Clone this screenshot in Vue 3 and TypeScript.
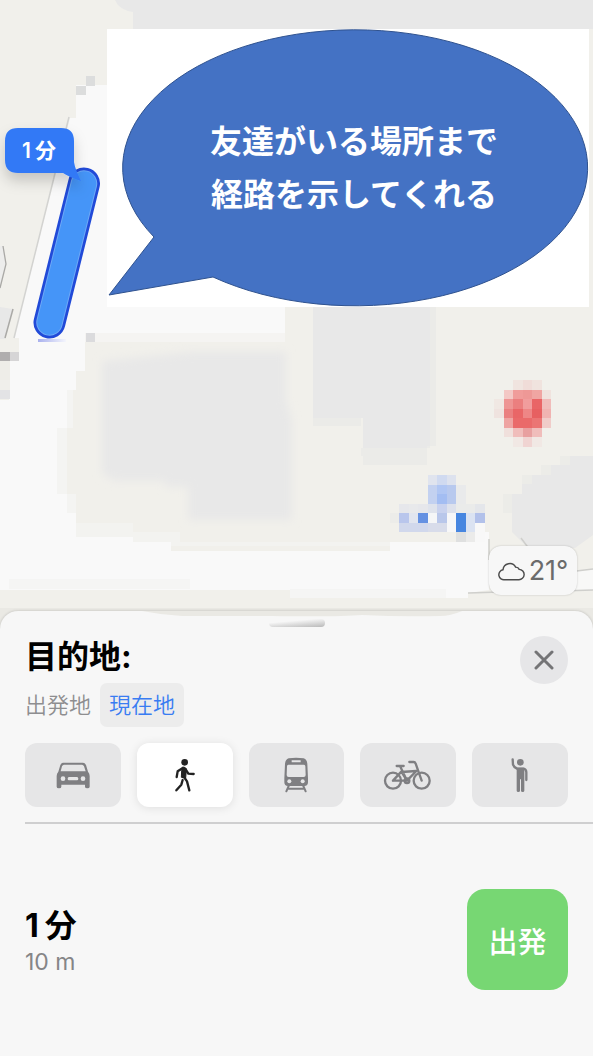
<script setup lang="ts">
import { ref } from 'vue'

type Cell = [col: number, row: number, fill: string]

const CELL = 9.5

const cells: Cell[] = [
  [9, 8, '#dcdddd'], [8, 9, '#dcdddd'], [9, 35, '#dbdbdd'],
  [0, 37, '#b0aeae'], [1, 37, '#d6d5d6'], [0, 38, '#eeede8'], [0, 39, '#eeede8'], [0, 40, '#f0efeb'], [0, 41, '#e3e3e5'],
  [54, 40, '#f0e4df'], [55, 40, '#f0dcd8'], [56, 40, '#f0e3de'],
  [53, 41, '#f3c8c5'], [54, 41, '#f09c9a'], [55, 41, '#ee9896'], [56, 41, '#f0a5a2'], [57, 41, '#f0e3de'],
  [52, 42, '#f0e8e3'], [53, 42, '#ee9594'], [54, 42, '#eb7f7f'], [55, 42, '#f19d9d'], [56, 42, '#e96566'], [57, 42, '#f0bcba'],
  [52, 43, '#efe3df'], [53, 43, '#ea8080'], [54, 43, '#e96667'], [55, 43, '#ee8686'], [56, 43, '#e76061'], [57, 43, '#f0b3b1'],
  [53, 44, '#eea4a2'], [54, 44, '#ea6a6a'], [55, 44, '#ea6a6a'], [56, 44, '#eb7574'], [57, 44, '#f0ccc9'],
  [53, 45, '#f0e0dc'], [54, 45, '#f0bdbb'], [55, 45, '#e8a0a0'], [56, 45, '#f0bdbb'],
  [54, 46, '#f1e8e4'], [55, 46, '#f0d4d2'], [56, 46, '#f1e8e4'],
  [45, 50, '#e0e4ee'], [46, 50, '#d0daf0'], [47, 50, '#dde2ee'],
  [45, 51, '#c3d1f0'], [46, 51, '#b0c6f3'], [47, 51, '#b8c9ee'], [48, 51, '#e9eaeb'],
  [45, 52, '#c3d1f0'], [46, 52, '#a3bdf2'], [47, 52, '#b8c9ee'], [48, 52, '#e9eaeb'],
  [42, 53, '#e6e7eb'], [43, 53, '#e8e9eb'], [44, 53, '#e6e7eb'], [45, 53, '#dfe3ec'], [46, 53, '#c9d2ee'], [47, 53, '#dde1ec'], [48, 53, '#eaebea'], [49, 53, '#eaebea'], [50, 53, '#e4e6ea'],
  [41, 54, '#ecece9'], [42, 54, '#b9c6ec'], [43, 54, '#e1e5ef'], [44, 54, '#6591e2'], [45, 54, '#f5f6f7'], [46, 54, '#b9c7ea'], [47, 54, '#f7f7f8'], [48, 54, '#4786e0'], [49, 54, '#dbe3f2'], [50, 54, '#b2c1ea'],
  [42, 55, '#d1d8ec'], [43, 55, '#d1d8ec'], [44, 55, '#d1d8ec'], [45, 55, '#d8dcea'], [46, 55, '#d8dcea'], [47, 55, '#f7f7f8'], [48, 55, '#4786e0'], [49, 55, '#dbe3f2'], [50, 55, '#f8f8f8'],
  [48, 56, '#dfe0e0'], [49, 56, '#ebebea'], [50, 56, '#f8f8f8'],
]

const modes = [
  { id: 'car', label: '車', box: '79 45 162 120' },
  { id: 'walk', label: '徒歩', box: '414 45 162 120' },
  { id: 'train', label: '交通機関', box: '89 45 162 120' },
  { id: 'bike', label: '自転車', box: '424 45 162 120' },
  { id: 'ride', label: '配車サービス', box: '159 45 162 120' },
]
const selected = ref('walk')
</script>

<template>
  <main class="screen">
    <section class="map" aria-label="地図">
      <svg class="map-art" viewBox="0 0 593 640">
        <defs>
          <filter id="soft" x="-10%" y="-10%" width="120%" height="120%"><feGaussianBlur stdDeviation="4" /></filter>
          <filter id="shade" x="-40%" y="-40%" width="180%" height="220%">
            <feDropShadow dx="0" dy="8" stdDeviation="7" flood-color="#000" flood-opacity=".18" />
          </filter>
          <linearGradient id="trace"><stop offset="0" stop-color="#a9b1ee" /><stop offset="1" stop-color="#f4f5fc" /></linearGradient>
        </defs>
        <rect width="593" height="640" fill="#f1f0eb" />
        <path d="M115 0H593V29H133V12Q119 10 115 0Z" fill="#e8e8e8" />
        <path d="M76 85H107V307H285V333H85V371H76V390H67V428H57V494H67V513H76V532H133V542H171V551H390V542H475V532H489V590H0V400H9V352H19V338H14L70 118H76Z" fill="#f9f9f9" />
        <path d="M76 523H133V532H180V542H390V546H171V542H133V537H76Z" fill="#f3f3f0" />
        <path d="M67 390H73V428H67V494H76V513H67V494H57V428H67Z" fill="#f4f4f2" />
        <path d="M85 333H285V342H85Z" fill="#f5f4f2" />
        <path d="M102 361L190 352H286V400L292 420V520H188V487H165V481H115L102 474Z" fill="#e8e8e8" filter="url(#soft)" />
        <path d="M313 307H430V448H422V454H363V418H313Z" fill="#e8e8e8" />
        <path d="M430 307H436V446H427V456H361V448H430ZM363 456H427V465H363ZM313 418H361V426H313Z" fill="#ebebe8" />
        <path d="M512 532V494H522V484H532V475H551V465H570V456H593V535L575 548H528Z" fill="#e8e8e8" />
        <path d="M503 494H512V513H503ZM522 475H532V484H522ZM541 465H551V475H541ZM560 456H570V465H560Z" fill="#ecece8" />
        <path d="M9 579H190V589H9ZM290 589H446V598H290Z" fill="#f5f5f4" />
        <path d="M446 580H489V590L468 593V598H446Z" fill="#f9f9f9" />
        <path d="M560 573L593 569V590L560 591Z" fill="#f8f8f7" />
        <path d="M489 539V560M521 538L530 550M468 593L500 592M560 573L593 569M560 591L593 590" fill="none" stroke="#cfcfcc" stroke-width="1.5" />
        <path d="M0 246H3L6 264L0 290Z" fill="#ededec" />
        <path d="M3 246L6 264L0 288" fill="none" stroke="#aaa9a6" stroke-width="1.3" />
        <path d="M0 307L13 309L5 339H0Z" fill="#e8e8e8" />
        <path d="M13 309L5 338" fill="none" stroke="#aaa9a6" stroke-width="1.5" />
        <path d="M69 117L14 338" fill="none" stroke="#d3d3d1" stroke-width="1.5" />
        <rect v-for="([col, row, fill], i) in cells" :key="i" :x="col * CELL" :y="row * CELL" :width="CELL" :height="CELL" :fill="fill" shape-rendering="crispEdges" />
        <rect y="608" width="593" height="32" fill="#eae9e4" />

        <rect x="38" y="339" width="28" height="3" fill="url(#trace)" />
        <path d="M84 183.500L49.500 322.500" stroke="#214ad8" stroke-width="32" stroke-linecap="round" />
        <path d="M84 183.500L49.500 322.500" stroke="#6ea9f6" stroke-width="26.500" stroke-linecap="round" />
        <path d="M84 183.500L49.500 322.500" stroke="#4595f8" stroke-width="24.500" stroke-linecap="round" />
        <path d="M18 128H61Q74 128 74 141V162Q75 169 81 181Q69 177 63 173H18Q5 173 5 160V141Q5 128 18 128Z" fill="#3379f6" filter="url(#shade)" />
        <text class="eta" x="39" y="158">1<tspan dx="4">分</tspan></text>

        <rect x="107" y="29" width="482" height="278" fill="#fff" />
        <path d="M154 237A232.500 138 0 1 1 213 277L109 295Z" fill="#4472c4" stroke="#2f528f" stroke-width="1" />
        <text class="note" x="354" y="153">友達がいる場所まで</text>
        <text class="note" x="354" y="206">経路を示してくれる</text>
      </svg>
      <button class="weather" type="button" aria-label="天気 21°">
        <svg class="cloud" viewBox="0 0 28 22"><path d="M7 20H21.500A5.300 5.300 0 0 0 22 9.300A3.800 3.800 0 0 0 18.300 7A7 7 0 0 0 5.200 9.700A5.200 5.200 0 0 0 7 20Z" /></svg>
        <span>21°</span>
      </button>
    </section>

    <section class="sheet">
      <svg class="fringe" viewBox="0 0 320 8" preserveAspectRatio="none"><path d="M0 0H320Q308 5 298 5Q260 6 220 4Q195 6 130 5H40Q20 4 0 0Z" /></svg>
      <div class="handle"></div>
      <header class="head">
        <h1>目的地:</h1>
        <button class="close" type="button" aria-label="閉じる">
          <svg viewBox="0 0 20 20"><path d="M2 2L18 18M18 2L2 18" /></svg>
        </button>
      </header>
      <div class="origin">
        <span>出発地</span>
        <button type="button">現在地</button>
      </div>
      <nav class="modes" aria-label="移動手段">
        <button v-for="m in modes" :key="m.id" type="button" class="mode" :class="{ on: selected === m.id }" :aria-label="m.label" :aria-pressed="selected === m.id" @click="selected = m.id">
          <svg :viewBox="m.box">
            <g v-if="m.id === 'car'">
              <path fill-rule="evenodd" d="M131 68H189Q196 68 199 75L205 95Q210 100 210 108V140Q210 145 203 145Q196 145 196 140V134H125V140Q125 145 118 145Q111 145 111 140V108Q111 100 116 95L122 75Q125 68 131 68ZM133 74Q129 74 127 79L123 94H198L193 79Q191 74 187 74ZM148 111Q144 111 144 116Q144 121 148 121H172Q176 121 176 116Q176 111 172 111Z" />
              <circle class="cut" cx="130" cy="116" r="7" /><circle class="cut" cx="190" cy="116" r="7" />
            </g>
            <g v-else-if="m.id === 'walk'">
              <circle cx="494" cy="67" r="10" />
              <path d="M486 82Q491 80 496 83Q499 85 499 90L497 114L484 112L485 92Z" stroke="currentColor" stroke-width="3" stroke-linejoin="round" />
              <path class="line" stroke-width="7" d="M485 86L473 94L470 111M497 88L505 101L521 102M492 111L501 124L508 151M488 120L484 134L469 151" />
            </g>
            <g v-else-if="m.id === 'train'">
              <path fill-rule="evenodd" d="M148 55Q170 51 193 55Q203 58 204 72L206 115V127Q206 138 195 138H146Q135 138 135 127V115L137 72Q138 58 148 55ZM157 61V67H184V61ZM147 74Q143 74 143 79L142 105Q142 111 148 111H193Q199 111 199 105L198 79Q198 74 194 74Z" />
              <circle class="cut" cx="150" cy="124" r="6" /><circle class="cut" cx="190" cy="124" r="6" />
              <path class="line" stroke-width="6" d="M148 138L141 154M192 138L199 154M147 146H194" />
            </g>
            <g v-else-if="m.id === 'bike'" class="line" stroke-width="7">
              <circle cx="460" cy="122" r="24" /><circle cx="546" cy="122" r="24" />
              <path d="M460 122L485 95L502 122H460M481 78L502 122L530 93L485 96M471 78H492M509 66H522Q526 66 528 71L546 122" />
              <circle cx="502" cy="122" r="7" />
            </g>
            <g v-else>
              <circle cx="241" cy="67" r="10" />
              <path class="line" stroke-width="7" d="M218 58L219 74Q221 81 231 86H250Q259 87 259 97V120" />
              <path d="M230 83H253V152Q253 156 248 156Q243 156 243 152V118H240V152Q240 156 235 156Q230 156 230 152Z" />
            </g>
          </svg>
        </button>
      </nav>
      <hr class="rule" />
      <div class="route">
        <div>
          <p class="time"><span>1</span><span>分</span></p>
          <p class="distance">10 m</p>
        </div>
        <button class="go" type="button">出発</button>
      </div>
    </section>
  </main>
</template>

<style>
body { margin: 0; background: #f7f7f7; }
</style>

<style scoped>
.screen { display: flex; flex-direction: column; min-height: 100vh; background: #f7f7f7; color: #000; font-family: Inter, "Noto Sans CJK JP", sans-serif; }
button { margin: 0; padding: 0; border: 0; font: inherit; cursor: pointer; }
.map { position: relative; }
.map-art { display: block; width: 100%; }
.eta, .note { fill: #fff; text-anchor: middle; }
.eta { font-size: 21px; font-weight: 600; }
.note { font-size: 32px; font-weight: 700; }
.weather { position: absolute; right: 16px; bottom: 45px; display: flex; align-items: center; justify-content: center; gap: 4px; width: 88px; height: 49px; border-radius: 12px; background: #f7f7f7; box-shadow: 0 0 2px rgb(0 0 0 / .22); color: #6b6b6b; font-size: 27px; }
.cloud { width: 27px; height: 22px; fill: none; stroke: #4c4c4c; stroke-width: 1.5; }
.sheet { position: relative; flex: 1; margin-top: -29px; padding: 8px 25px 0; border-radius: 18px 18px 0 0; background: #f7f7f7; box-shadow: 0 0 3px rgb(0 0 0 / .2); }
.fringe { position: absolute; top: 0; left: 24%; width: 54%; height: 8px; fill: #eae9e4; }
.handle { width: 56px; height: 8px; margin: 0 auto; border-radius: 2px 4px 4px 4px; background: linear-gradient(175deg, #f7f7f7 30%, #b9b9b9); }
.head { display: flex; align-items: center; justify-content: space-between; height: 48px; margin-top: 9px; }
h1 { margin: 0; padding-bottom: 6px; font-size: 32px; line-height: 40px; font-weight: 700; }
.close { display: grid; place-items: center; width: 48px; height: 48px; border-radius: 50%; background: #e6e6e8; }
.close svg { width: 20px; height: 20px; fill: none; stroke: #747476; stroke-width: 3; stroke-linecap: round; }
.origin { display: flex; align-items: center; gap: 9px; margin-top: -1px; color: #8e8e90; font-size: 22px; font-weight: 350; line-height: 40px; }
.origin button { height: 44px; padding: 0 9px; border-radius: 7px; background: #ececec; color: #397cf2; }
.modes { display: grid; grid-template-columns: repeat(5, 1fr); gap: 16px; margin-top: 16px; }
.mode { display: grid; place-items: center; height: 64px; border-radius: 12px; background: #e6e6e7; color: #7f7f82; }
.mode.on { background: #fff; color: #222; box-shadow: 0 1px 10px rgb(0 0 0 / .1); }
.mode svg { width: 54px; height: 40px; fill: currentColor; }
.mode .line { fill: none; stroke: currentColor; stroke-linecap: round; stroke-linejoin: round; }
.cut { fill: #e6e6e7; }
.rule { height: 2px; margin: 15px -25px 0 0; border: 0; background: #cfcfd0; }
.route { display: flex; align-items: center; justify-content: space-between; margin-top: 65px; }
.route p { margin: 0; }
.route .time { display: flex; gap: 6px; padding-top: 4px; font-size: 32px; line-height: 40px; font-weight: 700; }
.distance { color: #858587; font-size: 23px; line-height: 32px; }
.go { width: 101px; height: 101px; border-radius: 18px; background: #77d773; color: #fff; font-size: 29px; font-weight: 500; }
</style>
